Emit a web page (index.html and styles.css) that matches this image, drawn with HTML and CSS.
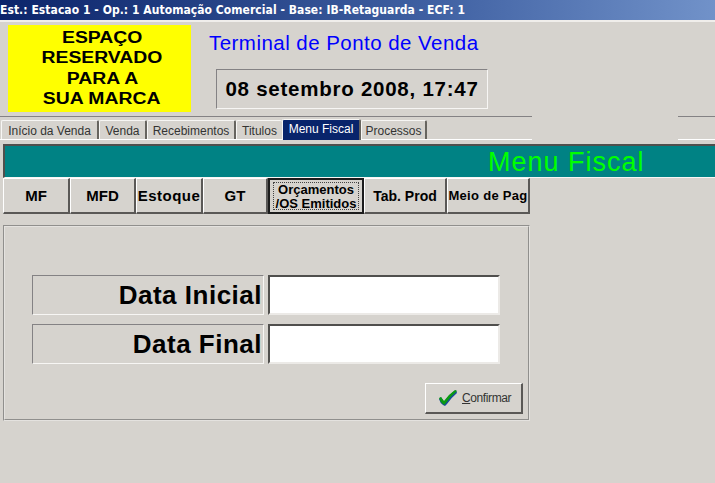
FILE: index.html
```html
<!DOCTYPE html>
<html lang="pt-BR">
<head>
<meta charset="utf-8">
<title>Terminal de Ponto de Venda</title>
<link rel="stylesheet" href="styles.css">
</head>
<body>
<div class="titlebar"><span>Est.: Estacao 1 - Op.: 1 Automação Comercial - Base: IB-Retaguarda - ECF: 1</span></div>
<header class="header">
  <div class="brand"><span>ESPAÇO</span><span>RESERVADO</span><span>PARA A</span><span>SUA MARCA</span></div>
  <div class="heading">
    <h1>Terminal de Ponto de Venda</h1>
    <div class="clock"><span>08 setembro 2008, 17:47</span></div>
  </div>
</header>
<div class="tabbar">
  <nav class="tabs">
    <a class="tab t1"><span>Início da Venda</span></a>
    <a class="tab t2"><span>Venda</span></a>
    <a class="tab t3"><span>Recebimentos</span></a>
    <a class="tab t4"><span>Titulos</span></a>
    <a class="tab t5 active"><span>Menu Fiscal</span></a>
    <a class="tab t6"><span>Processos</span></a>
  </nav>
  <div class="tabend"></div>
</div>
<main>
  <div class="banner"><span>Menu Fiscal</span></div>
  <div class="tools">
    <button class="tool k1"><span>MF</span></button>
    <button class="tool k2"><span>MFD</span></button>
    <button class="tool k3"><span>Estoque</span></button>
    <button class="tool k4"><span>GT</span></button>
    <button class="tool k5"><span class="focus"><span>Orçamentos</span><span>/OS Emitidos</span></span></button>
    <button class="tool k6"><span>Tab. Prod</span></button>
    <button class="tool k7"><span>Meio de Pag</span></button>
  </div>
  <section class="panel">
    <div class="row"><label for="ini"><span>Data Inicial</span></label><input id="ini"></div>
    <div class="row"><label for="fim"><span>Data Final</span></label><input id="fim"></div>
    <button class="confirm">
      <svg width="20" height="18" viewBox="0 0 20 18"><path d="M1 10 3 8 6 13 10 8 15 3 18 1 19 4Q13 9 9 15L7 17 5 16Q2 14 1 10Z" fill="#174b9c"/><path d="M1 9 3 8 6 12Q11 5 17 1L19 2Q13 7 8 14L6 16Q2 13 1 9Z" fill="#0a9b12"/></svg>
      <span><u>C</u>onfirmar</span>
    </button>
  </section>
</main>
</body>
</html>
```
FILE: styles.css
```css
* { box-sizing: border-box; }
body { margin: 0; height: 483px; overflow: hidden; background: #d6d3ce; color: #000; font-family: "Liberation Sans", Arial, sans-serif; }
span { white-space: nowrap; }
button { border-radius: 0; background: #d6d3ce; padding: 0; color: #000; font-family: inherit; }
.titlebar { height: 22px; border-bottom: 2px solid #f0eeeb; background: linear-gradient(90deg, #0b246a, #3f60a2 60%, #7192c9); color: #fff; font: bold 12px/20px "DejaVu Sans Condensed", sans-serif; }
.titlebar span { letter-spacing: 0.05px; }
.header { display: flex; height: 94px; padding: 3px 0 0 8px; }
.brand { width: 183px; height: 87px; padding: 3px 0 0 5px; background: #ff0; display: flex; flex-direction: column; align-items: center; font: bold 16px/20.4px "Liberation Sans", sans-serif; }
.brand span { transform: scaleX(1.21); }
.heading { padding-left: 18px; }
h1 { margin: 6px 0 0; height: 24px; color: #00f; font-size: 20.5px; line-height: 24px; font-weight: 400; white-space: nowrap; letter-spacing: 0.46px; }
.clock { margin: 14px 0 0 7px; width: 272px; height: 40px; border: 1px solid; border-color: #848284 #f7f6f4 #f7f6f4 #848284; text-align: center; font-size: 20.5px; line-height: 38px; font-weight: 700; letter-spacing: 0.75px; }
.tabbar { display: flex; justify-content: space-between; height: 28px; }
.tabs { display: flex; align-items: flex-end; width: 532px; height: 24px; padding-left: 1px; border-top: 1px solid #848284; border-bottom: 1px solid #fff; }
.tabend { width: 37px; height: 24px; border-top: 1px solid #848284; border-bottom: 1px solid #fff; }
.tab { height: 19px; border: solid; border-width: 1px 2px 0 1px; border-color: #f7f6f4 #66645f #66645f #f7f6f4; border-radius: 2px 2px 0 0; display: flex; justify-content: center; font-size: 12px; line-height: 20px; color: #333; }
.t1 { width: 98px; } .t2 { width: 48px; } .t3 { width: 89px; } .t4 { width: 46px; border-right: 0; } .t5 { width: 79px; } .t6 { width: 66px; }
.tab.active { height: 21px; margin-bottom: -1px; background: #08246b; color: #fff; line-height: 18px; }
main { padding-left: 3px; }
.banner { height: 34px; border-top: 2px solid #504f4d; border-left: 2px solid #504f4d; border-bottom: 1px solid #f7f6f4; background: #008284; color: #0f0; padding-left: 483px; font-size: 27px; line-height: 33px; letter-spacing: 1px; }
.tools { display: flex; height: 36px; }
.tool { height: 36px; display: flex; align-items: center; justify-content: center; border: solid; border-width: 1px 2px 2px 1px; border-color: #fff #5a5856 #5a5856 #fff; font-size: 15px; font-weight: 700; }
.k1 { width: 67px; } .k2 { width: 66px; } .k3 { width: 67px; } .k4 { width: 65px; } .k5 { width: 96px; } .k6 { width: 83px; } .k7 { width: 83px; }
.k3 { font-size: 15px; letter-spacing: 0.5px; } .k6 { font-size: 14px; } .k7 { font-size: 13px; letter-spacing: 0.3px; }
.tool.k5 { border: 2px solid #1c1c1c; font-size: 13px; }
.focus { width: 86px; height: 28px; border: 1px dotted #444; display: flex; flex-direction: column; align-items: center; line-height: 14px; }
.panel { width: 527px; height: 196px; margin-top: 11px; padding: 48px 0 0 27px; border: 2px groove #e4e2df; }
.row { display: flex; gap: 4px; margin-bottom: 9px; height: 40px; }
label { width: 232px; height: 40px; border: 1px solid; border-color: #848284 #f7f6f4 #f7f6f4 #848284; text-align: right; font-size: 26px; line-height: 39px; font-weight: 700; padding-right: 1px; letter-spacing: 0.5px; }
input { width: 232px; height: 40px; border: 2px solid; border-color: #504f4d #eceae7 #eceae7 #504f4d; background: #fff; outline: 0; padding: 0 4px; font-size: 26px; }
.confirm { display: flex; align-items: center; width: 98px; height: 31px; margin: 19px 0 0 393px; padding-left: 12px; border: solid; border-width: 1px 2px 2px 1px; border-color: #fff #5a5856 #5a5856 #fff; font-size: 12px; letter-spacing: -0.4px; color: #333; gap: 4px; }
```
